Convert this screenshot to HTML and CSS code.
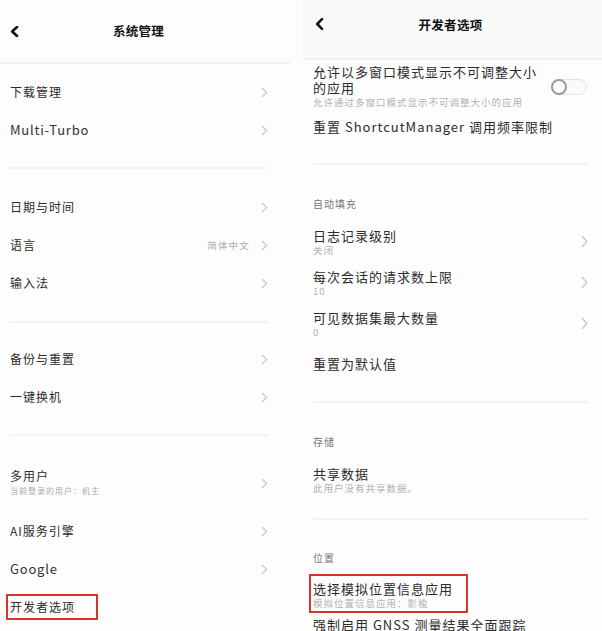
FILE: index.html
```html
<!DOCTYPE html>
<html lang="zh-CN">
<head>
<meta charset="utf-8">
<title>系统管理 / 开发者选项</title>
<link rel="stylesheet" href="styles.css">
</head>
<body>
<div class="screen">
  <section class="panel panel-left">
    <header class="topbar topbar-left">
      <svg class="back back-left" width="9" height="11" viewBox="0 0 9 11"><path d="M7 1L2.2 5.5 7 10" fill="none" stroke="#111" stroke-width="2.6" stroke-linecap="round" stroke-linejoin="round"/></svg>
      <h1 class="title">系统管理</h1>
    </header>

    <div class="lgroup lg1">
      <div class="lrow"><span class="llabel">下载管理</span><svg class="chev" width="7" height="11" viewBox="0 0 7 11"><path d="M1 1l4.6 4.5L1 10" fill="none" stroke="#c9c9c9" stroke-width="1.3"/></svg></div>
      <div class="lrow"><span class="llabel latin">Multi-Turbo</span><svg class="chev" width="7" height="11" viewBox="0 0 7 11"><path d="M1 1l4.6 4.5L1 10" fill="none" stroke="#c9c9c9" stroke-width="1.3"/></svg></div>
    </div>
    <div class="ldivider"></div>

    <div class="lgroup lg2">
      <div class="lrow"><span class="llabel">日期与时间</span><svg class="chev" width="7" height="11" viewBox="0 0 7 11"><path d="M1 1l4.6 4.5L1 10" fill="none" stroke="#c9c9c9" stroke-width="1.3"/></svg></div>
      <div class="lrow"><span class="llabel">语言</span><span class="trail"><span class="value">简体中文</span><svg class="chev" width="7" height="11" viewBox="0 0 7 11"><path d="M1 1l4.6 4.5L1 10" fill="none" stroke="#c9c9c9" stroke-width="1.3"/></svg></span></div>
      <div class="lrow"><span class="llabel">输入法</span><svg class="chev" width="7" height="11" viewBox="0 0 7 11"><path d="M1 1l4.6 4.5L1 10" fill="none" stroke="#c9c9c9" stroke-width="1.3"/></svg></div>
    </div>
    <div class="ldivider"></div>

    <div class="lgroup lg3">
      <div class="lrow"><span class="llabel">备份与重置</span><svg class="chev" width="7" height="11" viewBox="0 0 7 11"><path d="M1 1l4.6 4.5L1 10" fill="none" stroke="#c9c9c9" stroke-width="1.3"/></svg></div>
      <div class="lrow"><span class="llabel">一键换机</span><svg class="chev" width="7" height="11" viewBox="0 0 7 11"><path d="M1 1l4.6 4.5L1 10" fill="none" stroke="#c9c9c9" stroke-width="1.3"/></svg></div>
    </div>
    <div class="ldivider"></div>

    <div class="lgroup lg4">
      <div class="lrow lrow-two">
        <span class="stack"><span class="llabel">多用户</span><span class="lsub">当前登录的用户：机主</span></span>
        <svg class="chev" width="7" height="11" viewBox="0 0 7 11"><path d="M1 1l4.6 4.5L1 10" fill="none" stroke="#c9c9c9" stroke-width="1.3"/></svg>
      </div>
      <div class="lrow"><span class="llabel">AI服务引擎</span><svg class="chev" width="7" height="11" viewBox="0 0 7 11"><path d="M1 1l4.6 4.5L1 10" fill="none" stroke="#c9c9c9" stroke-width="1.3"/></svg></div>
      <div class="lrow"><span class="llabel latin">Google</span><svg class="chev" width="7" height="11" viewBox="0 0 7 11"><path d="M1 1l4.6 4.5L1 10" fill="none" stroke="#c9c9c9" stroke-width="1.3"/></svg></div>
      <div class="lrow"><span class="llabel highlight-left">开发者选项</span></div>
    </div>
  </section>

  <section class="panel panel-right">
    <header class="topbar topbar-right">
      <svg class="back back-right" width="9" height="12" viewBox="0 0 9 12"><path d="M7 1.2L2.2 6 7 10.8" fill="none" stroke="#111" stroke-width="2.6" stroke-linecap="round" stroke-linejoin="round"/></svg>
      <h1 class="title">开发者选项</h1>
    </header>

    <div class="rgroup rg1">
      <div class="rrow rrow-multi">
        <span class="stack">
          <span class="rlabel rlabel-wrap">允许以多窗口模式显示不可调整大小<br>的应用</span>
          <span class="rsub">允许通过多窗口模式显示不可调整大小的应用</span>
        </span>
        <span class="toggle"><span class="knob"></span></span>
      </div>
      <div class="rrow rrow-single rrow-short"><span class="rlabel">重置 ShortcutManager 调用频率限制</span></div>
    </div>
    <div class="rdivider"></div>

    <div class="rgroup rg2">
      <div class="section">自动填充</div>
      <div class="rrow rrow-two">
        <span class="stack"><span class="rlabel">日志记录级别</span><span class="rsub">关闭</span></span>
        <svg class="chev" width="7" height="13" viewBox="0 0 7 13"><path d="M1 1l4.8 5.5L1 12" fill="none" stroke="#c9c9c9" stroke-width="1.4"/></svg>
      </div>
      <div class="rrow rrow-two">
        <span class="stack"><span class="rlabel">每次会话的请求数上限</span><span class="rsub">10</span></span>
        <svg class="chev" width="7" height="13" viewBox="0 0 7 13"><path d="M1 1l4.8 5.5L1 12" fill="none" stroke="#c9c9c9" stroke-width="1.4"/></svg>
      </div>
      <div class="rrow rrow-two">
        <span class="stack"><span class="rlabel">可见数据集最大数量</span><span class="rsub">0</span></span>
        <svg class="chev" width="7" height="13" viewBox="0 0 7 13"><path d="M1 1l4.8 5.5L1 12" fill="none" stroke="#c9c9c9" stroke-width="1.4"/></svg>
      </div>
      <div class="rrow rrow-single rrow-reset"><span class="rlabel">重置为默认值</span></div>
    </div>
    <div class="rdivider"></div>

    <div class="rgroup rg3">
      <div class="section">存储</div>
      <div class="rrow rrow-two">
        <span class="stack"><span class="rlabel">共享数据</span><span class="rsub">此用户没有共享数据。</span></span>
      </div>
    </div>
    <div class="rdivider"></div>

    <div class="rgroup rg4">
      <div class="section section-pos">位置</div>
      <div class="rrow rrow-mock">
        <span class="stack highlight-right"><span class="rlabel">选择模拟位置信息应用</span><span class="rsub">模拟位置信息应用：影梭</span></span>
      </div>
      <div class="rrow rrow-gnss"><span class="rlabel">强制启用 GNSS 测量结果全面跟踪</span></div>
    </div>
  </section>
</div>
</body>
</html>
```

FILE: styles.css
```css
* { box-sizing: border-box; }

html, body {
  margin: 0;
  padding: 0;
}

body {
  background: #fdfdfd;
  font-family: "Noto Sans CJK SC", "Noto Sans", sans-serif;
  color: #2c2c2c;
}

.screen {
  display: flex;
  align-items: flex-start;
  width: 602px;
  height: 631px;
  overflow: hidden;
}

.panel {
  display: block;
  flex: none;
  height: 631px;
  overflow: hidden;
}

.panel-left {
  width: 290px;
}

.panel-right {
  width: 299px;
  margin-left: 13px;
}

/* top bars */
.topbar {
  display: grid;
  grid-template-columns: 1fr auto 1fr;
  align-items: start;
  border-bottom: 2px solid #f1f1f1;
}

.topbar-left {
  height: 64px;
  padding: 21px 23px 0 10px;
}

.topbar-right {
  height: 60px;
  padding: 15px 16px 0 12px;
  background: #fafafa;
}

.back {
  display: block;
}

.back-left {
  margin-top: 5px;
}

.back-right {
  margin-top: 3px;
}

.title {
  grid-column: 2;
  margin: 0;
  font-size: 12.5px;
  line-height: 20px;
  font-weight: 700;
  color: #111;
  letter-spacing: 0.3px;
}

/* left list */
.lgroup {
  padding: 0 22px 0 10px;
}

.lg1 { padding-top: 9px; padding-bottom: 18px; }
.lg2 { padding-top: 19px; padding-bottom: 19px; }
.lg3 { padding-top: 17px; padding-bottom: 18px; }
.lg4 { padding-top: 18px; }

.ldivider {
  height: 2px;
  margin: 0 22px 0 10px;
  background: #f2f2f2;
}

.lrow {
  display: flex;
  align-items: center;
  justify-content: space-between;
  height: 38px;
}

.lrow-two {
  height: 58px;
  align-items: flex-start;
  padding-top: 14px;
}

.lrow-two .chev {
  margin-top: 10px;
}

.stack {
  display: flex;
  flex-direction: column;
}

.llabel {
  font-size: 12px;
  line-height: 16px;
  letter-spacing: 1px;
  color: #2c2c2c;
}

.latin {
  font-size: 13px;
  letter-spacing: 0.8px;
  color: #333;
}

.lsub {
  font-size: 8px;
  line-height: 13px;
  letter-spacing: 1px;
  color: #a8a8a8;
}

.trail {
  display: flex;
  align-items: center;
  gap: 11px;
}

.value {
  font-size: 9.5px;
  letter-spacing: 1.2px;
  color: #aaaaaa;
}

.chev {
  display: block;
  flex: none;
}

.highlight-left {
  border: 2px solid #d8352c;
  margin-left: -4px;
  padding: 3px 21px 3px 2px;
}

/* right list */
.rgroup {
  padding: 0 14px 0 10px;
}

.rg1 { padding-top: 4px; padding-bottom: 22px; }
.rg2 { padding-bottom: 18px; }
.rg3 { padding-bottom: 21px; }

.rdivider {
  height: 2px;
  margin: 0 14px 0 10px;
  background: #f2f2f2;
}

.section {
  padding: 31px 0 6px;
  font-size: 10px;
  line-height: 16px;
  letter-spacing: 1px;
  color: #777;
}

.section-pos {
  padding-top: 30px;
}

.rrow {
  display: flex;
  align-items: center;
  justify-content: space-between;
}

.rrow-multi {
  padding-bottom: 0;
}

.rrow-short {
  height: 32px;
  padding-top: 4px;
}

.rrow-two {
  height: 41px;
  padding: 10px 0 2px;
  align-items: flex-start;
}

.rrow-two .chev {
  margin-top: 7px;
}

.rrow-reset {
  height: 42px;
  padding-top: 4px;
}

.rrow-mock {
  padding-top: 2px;
}

.rrow-gnss {
  padding-top: 4px;
}

.rlabel {
  font-size: 13px;
  line-height: 16px;
  letter-spacing: 1px;
  color: #2c2c2c;
}

.rsub {
  font-size: 9.5px;
  line-height: 13px;
  letter-spacing: 1px;
  color: #b2b2b2;
}

.highlight-right {
  border: 2px solid #d8352c;
  margin-left: -4px;
  padding: 5px 13px 1px 2px;
}

/* toggle */
.toggle {
  position: relative;
  flex: none;
  width: 36px;
  height: 16px;
  border: 1px solid #e4e4e4;
  border-radius: 8px;
  background: #fafafa;
  margin-right: 1px;
}

.knob {
  position: absolute;
  left: -1px;
  top: -1px;
  width: 16px;
  height: 16px;
  border: 2.5px solid #9c9c9c;
  border-radius: 50%;
  background: #fff;
}
```
